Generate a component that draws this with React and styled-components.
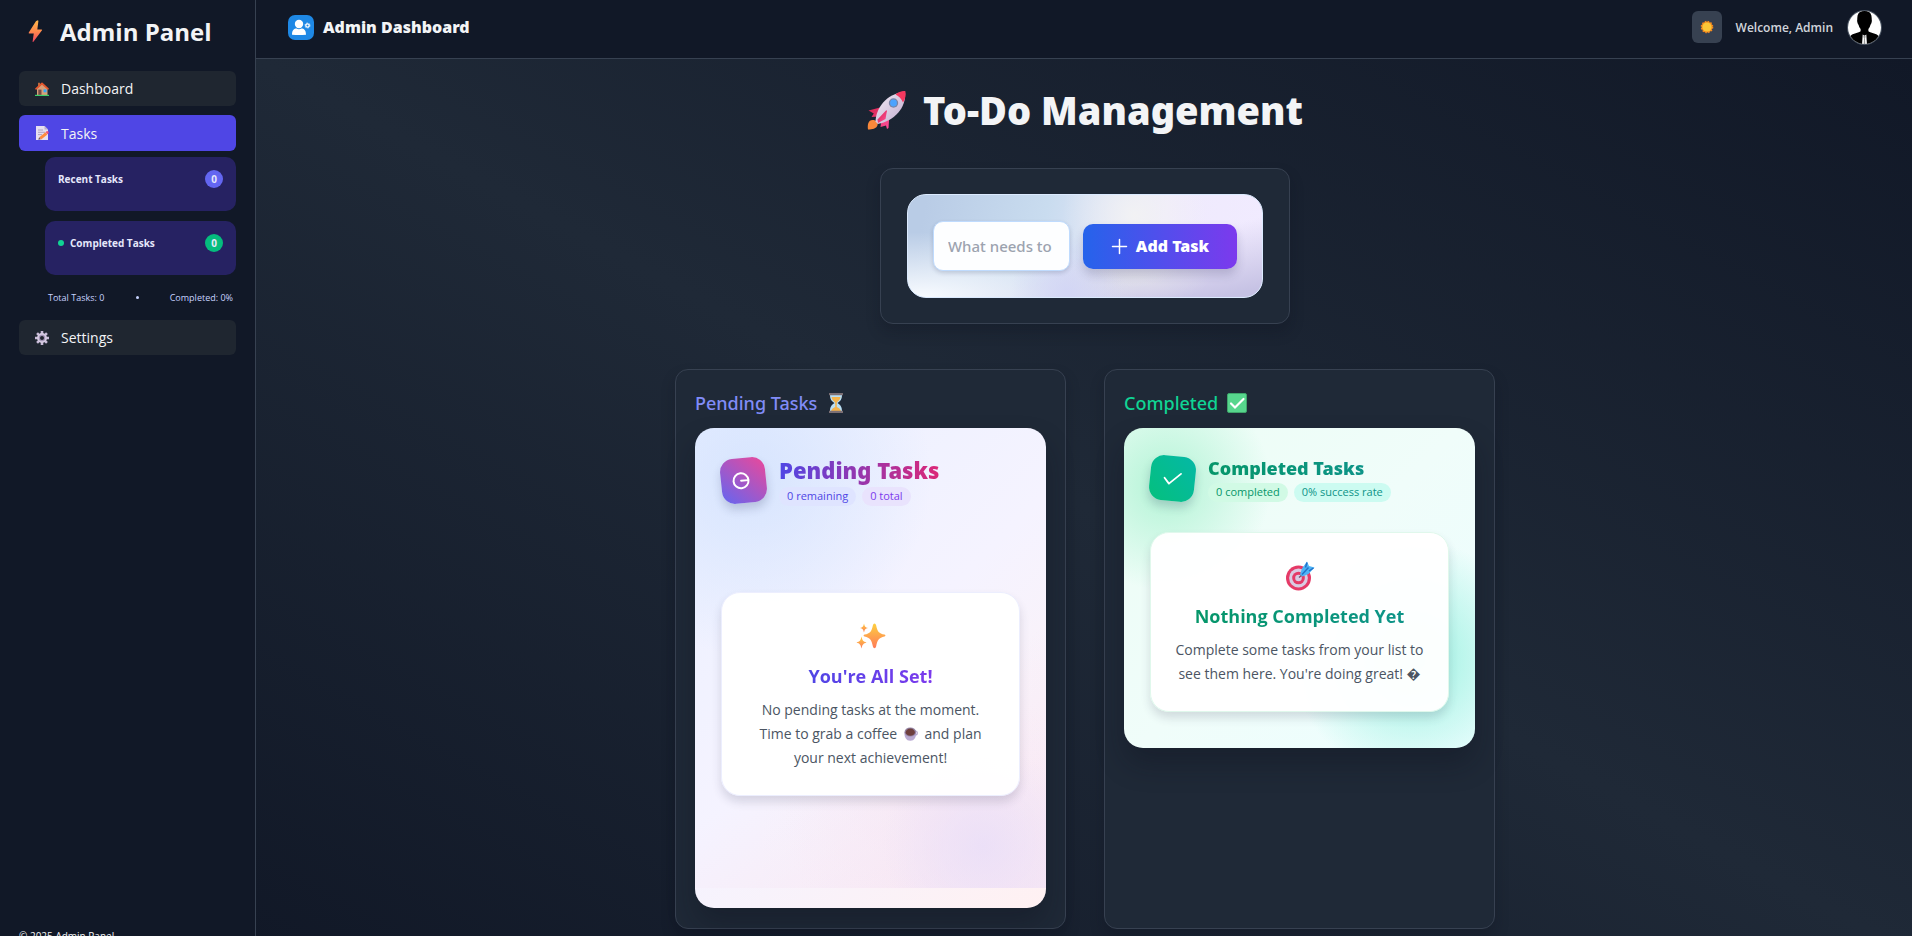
import React from "react";
import styled, { createGlobalStyle, css } from "styled-components";

const GlobalStyle = createGlobalStyle`
  *, *::before, *::after { box-sizing: border-box; }
  body {
    margin: 0;
    background: #111827;
    color: #f3f4f6;
    font-family: "Open Sans", "Noto Sans", "DejaVu Sans", sans-serif;
    font-size: 14px;
  }
  h1, h2, h3, p, ul { margin: 0; padding: 0; }
  ul { list-style: none; }
  a { color: inherit; text-decoration: none; }
  button, input { font: inherit; }
  svg { display: block; flex: none; }
`;

const heavy = css`
  font-family: "Noto Sans", "Open Sans", sans-serif;
  font-weight: 900;
`;

/* ---------- layout ---------- */

const Shell = styled.div`
  display: grid;
  grid-template-columns: 256px minmax(0, 1fr);
  min-height: 100vh;
`;

const Sidebar = styled.aside`
  display: flex;
  flex-direction: column;
  padding: 12px 19px 8px;
  background: #111827;
  border-right: 1px solid #374151;
`;

const Brand = styled.div`
  display: flex;
  align-items: center;
  gap: 13px;
  height: 39px;
  padding-left: 5px;
  margin-bottom: 20px;
  font-size: 24px;
  font-weight: 700;
  white-space: nowrap;
`;

const Nav = styled.nav`
  display: flex;
  flex-direction: column;
  gap: 9px;
  flex: 1;
`;

const NavItem = styled.a`
  display: flex;
  align-items: center;
  gap: 12px;
  height: ${(p) => (p.$active ? "36px" : "35px")};
  padding: 0 16px;
  border-radius: 6px;
  font-size: 14px;
  background: ${(p) => (p.$active ? "#4f46e5" : "#1f2630")};
`;

const SubList = styled.ul`
  display: flex;
  flex-direction: column;
  gap: 10px;
  padding: 0 0 0 26px;
  margin-top: -3px;
`;

const SubItem = styled.li`
  display: flex;
  align-items: flex-start;
  gap: 6px;
  height: 54px;
  padding: 13px;
  border-radius: 10px;
  background: #262262;
  color: #e5e7fb;
  font-size: 10px;
  line-height: 18px;
  font-weight: 700;
`;

const Dot = styled.span`
  width: 6px;
  height: 6px;
  margin-top: 6px;
  border-radius: 50%;
  background: #10d494;
`;

const Count = styled.span`
  width: 18px;
  height: 18px;
  margin-left: auto;
  border-radius: 50%;
  background: ${(p) => p.$color};
  font-size: 10px;
  text-align: center;
`;

const Totals = styled.div`
  display: flex;
  align-items: center;
  justify-content: space-between;
  height: 27px;
  padding: 0 3px 0 29px;
  color: #c7d2fe;
  font-size: 9px;
  font-weight: 500;
`;

const TinyDot = styled.span`
  width: 3px;
  height: 3px;
  border-radius: 50%;
  background: #c7d2fe;
`;

const Copyright = styled.footer`
  font-size: 10px;
  line-height: 18px;
`;

const Content = styled.div`
  display: flex;
  flex-direction: column;
  min-width: 0;
`;

const Header = styled.header`
  display: flex;
  align-items: center;
  gap: 14px;
  height: 59px;
  padding: 0 30px 4px 32px;
  background: #111827;
  border-bottom: 1px solid #374151;
`;

const HeaderTitle = styled.h2`
  ${heavy}
  display: flex;
  align-items: center;
  gap: 9px;
  margin-right: auto;
  font-size: 16px;
`;

const ThemeButton = styled.button`
  display: grid;
  place-items: center;
  width: 30px;
  height: 32px;
  padding: 0;
  border: 0;
  border-radius: 6px;
  background: #374151;
`;

const Welcome = styled.span`
  color: #d1d5db;
  font-size: 12px;
  font-weight: 600;
`;

const Main = styled.main`
  flex: 1;
  display: flex;
  flex-direction: column;
  align-items: center;
  padding: 24px 24px 24px 26px;
  background: linear-gradient(to top right, #111827, #1f2937 50%, #111827);
`;

const PageTitle = styled.h1`
  ${heavy}
  display: flex;
  align-items: center;
  gap: 16px;
  height: 54px;
  margin-bottom: 31px;
  font-size: 38px;
  white-space: nowrap;
`;

const panel = css`
  border: 1px solid #374151;
  border-radius: 13px;
  background: #1f2937;
  box-shadow: 0 8px 14px rgba(10, 15, 28, 0.25);
`;

const AddPanel = styled.section`
  ${panel}
  width: 100%;
  max-width: 410px;
  padding: 25px 26px;
  margin-bottom: 45px;
`;

const AddForm = styled.form`
  display: flex;
  align-items: center;
  gap: 13px;
  height: 104px;
  padding: 0 25px;
  border: 1px solid #dbeafe;
  border-radius: 19px;
  background:
    radial-gradient(circle at 64% 20%, rgba(243, 243, 243, 0.9), rgba(243, 243, 243, 0) 30%),
    radial-gradient(circle at 45% 95%, rgba(210, 213, 245, 0.9), rgba(210, 213, 245, 0) 26%),
    radial-gradient(ellipse at 64% 80%, rgba(222, 222, 232, 0.9), rgba(222, 222, 232, 0) 24%),
    radial-gradient(ellipse at 4% 100%, #f8fbff, rgba(228, 240, 251, 0) 45%),
    linear-gradient(168deg, rgba(240, 235, 255, 0) 55%, #c6c2e4 95%),
    linear-gradient(100deg, #b9cce6 5%, #c9dcef 38%, #efeafd 70%, #f1ebff);
`;

const TaskInput = styled.input`
  flex: 1;
  min-width: 0;
  height: 50px;
  padding: 0 15px 0 14px;
  border: 1px solid #bfdbfe;
  border-radius: 10px;
  outline: 0;
  background: #fdfeff;
  box-shadow: 0 2px 4px rgba(30, 41, 80, 0.18);
  color: #1f2937;
  font-family: "Noto Sans", "Open Sans", sans-serif;
  font-size: 15px;
  font-weight: 500;
  &::placeholder { color: #9ca3af; opacity: 1; }
`;

const AddButton = styled.button`
  ${heavy}
  display: flex;
  align-items: center;
  justify-content: center;
  gap: 8px;
  width: 154px;
  height: 45px;
  padding: 0;
  border: 0;
  border-radius: 10px;
  background: linear-gradient(90deg, #2563eb, #7c3aed);
  box-shadow: 0 6px 10px rgba(40, 40, 90, 0.2);
  color: #fff;
  font-size: 16px;
  white-space: nowrap;
`;

const Columns = styled.div`
  display: grid;
  grid-template-columns: repeat(2, minmax(0, 1fr));
  gap: 38px;
  width: 100%;
  max-width: 820px;
`;

const Column = styled.section`
  ${panel}
  padding: 20px 19px;
`;

const ColumnTitle = styled.h2`
  display: flex;
  align-items: center;
  gap: 9px;
  height: 26px;
  margin-bottom: 12px;
  color: ${(p) => p.$color};
  font-family: "Noto Sans", "Open Sans", sans-serif;
  font-size: 18px;
  font-weight: 500;
`;

const Board = styled.div`
  position: relative;
  display: flex;
  flex-direction: column;
  height: ${(p) => p.$height};
  padding: 26px;
  overflow: hidden;
  border-radius: 19px;
  box-shadow: 0 16px 28px rgba(12, 16, 28, 0.32);
  background: ${(p) => p.$background};
`;

const Glow = styled.div`
  position: absolute;
  inset: 0 0 20px;
  background:
    radial-gradient(circle 100px at 82% 91%, rgba(233, 222, 248, 0.8), rgba(236, 224, 248, 0)),
    radial-gradient(circle 150px at 68% 84%, rgba(246, 228, 243, 0.5), rgba(246, 228, 243, 0)),
    linear-gradient(150deg, rgba(247, 236, 248, 0) 60%, rgba(245, 228, 244, 0.8) 100%);
`;

const BoardHead = styled.div`
  position: relative;
  display: flex;
  align-items: flex-start;
  gap: 13px;
  height: 78px;
`;

const Tile = styled.div`
  display: grid;
  place-items: center;
  width: 45px;
  height: 45px;
  margin-top: ${(p) => p.$top};
  border-radius: 13px;
  background: ${(p) => p.$background};
  box-shadow: 0 6px 10px rgba(40, 50, 90, 0.2);
  transform: rotate(${(p) => p.$tilt});
`;

const gradientText = css`
  width: fit-content;
  background: ${(p) => p.$ink};
  background-clip: text;
  -webkit-background-clip: text;
  color: transparent;
`;

const BoardTitle = styled.h3`
  ${gradientText}
  ${heavy}
  font-size: ${(p) => p.$size};
  line-height: ${(p) => p.$line};
  white-space: nowrap;
`;

const Chips = styled.div`
  display: flex;
  gap: 6px;
`;

const Chip = styled.span`
  height: 19px;
  padding: 0 8px;
  border-radius: 10px;
  background: ${(p) => p.$background};
  color: ${(p) => p.$color};
  font-size: 11px;
  line-height: 18px;
  font-weight: 500;
  white-space: nowrap;
`;

const EmptyCard = styled.div`
  position: relative;
  display: flex;
  flex-direction: column;
  align-items: center;
  margin: ${(p) => p.$margin};
  padding: 27px 25px 25px;
  border: 1px solid ${(p) => p.$border};
  border-radius: 19px;
  background: rgba(255, 255, 255, 0.96);
  box-shadow: 0 6px 10px rgba(50, 50, 80, 0.16);
`;

const EmptyTitle = styled.h3`
  ${gradientText}
  margin: 11px 0 9px;
  font-size: 18px;
  line-height: 26px;
  font-weight: 700;
  white-space: nowrap;
`;

const EmptyText = styled.p`
  color: #4b5563;
  font-size: 14px;
  line-height: 24px;
  text-align: center;
  white-space: nowrap;
  svg { display: inline-block; margin: 0 3px; vertical-align: -2px; }
`;

/* ---------- drawings ---------- */

const Bolt = () => (
  <svg width="23" height="23" viewBox="0 0 24 24" aria-hidden="true">
    <defs>
      <linearGradient id="bolt" x1="0" y1="0" x2="0" y2="1">
        <stop offset="0" stopColor="#ffb84a" />
        <stop offset="0.5" stopColor="#ff8a4c" />
        <stop offset="1" stopColor="#f0425f" />
      </linearGradient>
    </defs>
    <path fill="url(#bolt)" d="M12.600 1 5 13q-.5 1 .6 1h4.600L9 22.500q0 1 .8.200L18.800 10.800q.5-.9-.6-.9h-4.300L15 1.400q0-1.400-1-1z" />
  </svg>
);

const House = () => (
  <svg width="14" height="14" viewBox="0 0 14 14" aria-hidden="true">
    <path fill="#bb6a3c" d="M3 .8h2v4H3z" />
    <path fill="#d8a078" d="M2 6.500 7.200 2 12.500 6.500V13H2z" />
    <path fill="#7a4a45" d="M3.300 7.600h3.200V13H3.300z" />
    <path fill="#35a8f5" d="M8.500 7.300h3v3h-3z" />
    <path fill="none" stroke="#e4572e" strokeWidth="1.700" strokeLinecap="round" strokeLinejoin="round" d="M1 6.800 7 1.500l6 5.300" />
    <path fill="#3ecf6a" d="M0 12.800h14V14H0z" />
  </svg>
);

const Memo = () => (
  <svg width="14" height="14" viewBox="0 0 14 14" aria-hidden="true">
    <path fill="#e6dff0" d="M1 0h8.500L13 3.500V14H1z" />
    <path fill="#b9aecb" d="M9.500 0 13 3.500H9.500z" />
    <path stroke="#a99bbd" strokeWidth=".9" d="M3 4h5M3 6.300h7M3 8.600h4" />
    <path stroke="#ff8a3c" strokeWidth="3" d="m5.200 12.300 6.200-5" />
    <path fill="#f0506e" d="m10.600 5.900 1.400-.9q1.500 0 1.900 1.700l-1.600 1.500z" />
    <path fill="#6b5560" d="m3.300 13.700.8-2.500 1.700 2z" />
  </svg>
);

const Gear = () => (
  <svg width="14" height="14" viewBox="0 0 14 14" aria-hidden="true">
    <g stroke="#c9bcd8" strokeWidth="2.600">
      <path d="M7 0v14M0 7h14M2.050 2.050l9.900 9.900M11.950 2.050l-9.900 9.900" />
    </g>
    <circle cx="7" cy="7" r="4.900" fill="#d6cbe2" />
    <circle cx="7" cy="7" r="3.200" fill="#a394b5" />
    <circle cx="7" cy="7" r="2" fill="#20242f" />
  </svg>
);

const AdminBadge = () => (
  <svg width="26" height="25" viewBox="0 0 26 25" aria-hidden="true">
    <rect width="26" height="25" rx="7" fill="#1e88e5" />
    <circle cx="11" cy="9" r="4.200" fill="#fff" />
    <path fill="#fff" d="M4 19.700c0-4.400 2-6.200 4.600-6.200q2.400 1.500 4.800 0c2.600 0 4.600 1.800 4.600 6.200q-7 .8-14 0z" />
    <circle cx="19.500" cy="10.500" r="1.700" fill="none" stroke="#fff" strokeWidth="1.300" />
    <circle cx="19.500" cy="10.500" r="2.500" fill="none" stroke="#fff" strokeWidth="1" strokeDasharray="1.100 1.518" />
  </svg>
);

const Sun = () => (
  <svg width="14" height="14" viewBox="0 0 14 14" aria-hidden="true">
    <circle cx="7" cy="7" r="5.500" fill="#f58a1f" />
    <circle cx="7" cy="7" r="5.500" fill="none" stroke="#f58a1f" strokeWidth="1.600" strokeDasharray="1.500 1.380" />
    <circle cx="7" cy="7" r="4.600" fill="#fcc637" />
  </svg>
);

const Avatar = () => (
  <svg width="35" height="35" viewBox="0 0 35 35" role="img" aria-label="Admin">
    <defs><clipPath id="face"><circle cx="17.500" cy="17.500" r="16.500" /></clipPath></defs>
    <circle cx="17.500" cy="17.500" r="17.500" fill="#4b5563" />
    <g clipPath="url(#face)">
      <path fill="#fff" d="M0 0h35v35H0z" />
      <path d="M17.500.8c5 0 7.500 3 7.200 8.200 0 1 .4 1.300 0 3-.4 2-1 2-1.300 3-.6 2.200-1.300 3-2 4v2.200c3 2.300 8.500 1.800 10.600 5.300L33 35H2l1-8.500c2.100-3.500 7.600-3 10.600-5.300V19c-.7-1-1.400-1.800-2-4-.3-1-.9-1-1.300-3-.4-1.700 0-2 0-3C10 3.800 12.500.8 17.500.8z" />
      <path fill="#fff" d="m15.700 24.500 1.800 1.200 1.800-1.200.7 10.500h-5z" />
      <path d="m16.700 25.500.8.600.8-.6.300 1.500-.7 1.200.4 5.800h-1.600l.4-5.800-.7-1.200z" fill="#999" />
    </g>
  </svg>
);

const Rocket = () => (
  <svg width="40" height="40" viewBox="0 0 40 40" aria-hidden="true">
    <defs>
      <linearGradient id="hull" x1="0" y1="0" x2="1" y2="1">
        <stop offset="0" stopColor="#f3edf7" />
        <stop offset="1" stopColor="#bfa9cc" />
      </linearGradient>
      <linearGradient id="fin" x1="0" y1="0" x2="1" y2="1">
        <stop offset="0" stopColor="#d8254e" />
        <stop offset="1" stopColor="#ff4f9b" />
      </linearGradient>
    </defs>
    <path fill="#f9883a" d="M1 39.500c-.6-5 .2-9.500 4.600-9.500 3.800 0 6 2.500 4.800 5.500-1 3-5 4-9.400 4z" />
    <path fill="url(#fin)" d="M1.500 20.500 15 17l-3 9.500-7.500.5 2.300-3.500zM20 39l-1-3.500-5.500 1.500 1-8 8-5-1 14z" />
    <path fill="url(#hull)" d="M8.500 31.500C9 19 18 4 38 1.500 39.800 18 27 31 10.800 34z" />
    <path fill="#f5385f" d="M28.500 4.500C31 2 35 .7 38.300 1c.9 3.500.2 8-2.300 11.500-1.500-3.500-4-6.500-7.500-8z" />
    <circle cx="26.500" cy="13" r="4.700" fill="#7a84a6" />
    <circle cx="26.500" cy="13" r="3.400" fill="#4da3ff" />
    <path fill="url(#fin)" d="m10.500 29.500 8.500-9q1-.5.900.8L18.500 29l-7.500 4z" />
  </svg>
);

const Plus = () => (
  <svg width="17" height="17" viewBox="0 0 17 17" fill="none" stroke="#fff" strokeWidth="1.500" strokeLinecap="round" aria-hidden="true">
    <path d="M8.500 1.500v14M1.500 8.500h14" />
  </svg>
);

const Hourglass = () => (
  <svg width="20" height="20" viewBox="0 0 20 20" aria-hidden="true">
    <path fill="#b9dff5" d="M4 1.500h12c0 5-1.500 6.500-4.500 8.500 3 2 4.500 3.500 4.500 8.500H4C4 13.500 5.500 12 8.500 10 5.500 8 4 6.500 4 1.500z" />
    <path fill="#f6b44c" d="M5.500 4h9c-.3 2.500-2 4-3.700 5.500V14c2 .7 3.500 2 4.200 4H5c.7-2 2.200-3.300 4.200-4V9.500C7.500 8 5.800 6.500 5.500 4z" />
    <path fill="#7b6f74" d="M3 0h14v2.200H3zM3 17.800h14V20H3z" />
  </svg>
);

const CheckBadge = () => (
  <svg width="20" height="20" viewBox="0 0 20 20" aria-hidden="true">
    <rect x=".5" y=".5" width="19" height="19" rx="1.500" fill="#57d68d" stroke="#3fa56b" />
    <path d="m4 10.500 4 4 8.500-8.500" fill="none" stroke="#fff" strokeWidth="2.200" strokeLinecap="round" />
  </svg>
);

const Clock = () => (
  <svg width="23" height="19" viewBox="0 0 23 19" fill="none" stroke="#fff" strokeWidth="2" strokeLinecap="round" aria-hidden="true">
    <circle cx="9" cy="9.500" r="7.500" />
    <path d="M9 9.500H16" strokeWidth="1.800" />
  </svg>
);

const Tick = () => (
  <svg width="21" height="21" viewBox="0 0 21 21" fill="none" stroke="#fff" strokeWidth="1.800" strokeLinecap="round" strokeLinejoin="round" aria-hidden="true">
    <path d="m2.500 10.500 5 5.500L18.500 5" />
  </svg>
);

const Sparkles = () => (
  <svg width="30" height="32" viewBox="0 0 30 32" aria-hidden="true">
    <defs>
      <linearGradient id="spark" x1="0" y1="0" x2="0" y2="1">
        <stop offset="0" stopColor="#fdd03f" />
        <stop offset="1" stopColor="#ff7a59" />
      </linearGradient>
    </defs>
    <g fill="url(#spark)">
      <path d="M18.500 3.500q1.200 0 1.600 1.700c1.400 6.500 2.700 8.100 8.400 9.400q1.900.9 0 1.800c-5.700 1.500-7 3.200-8.400 10.200q-.4 1.700-1.600 1.700t-1.600-1.700c-1.400-7-2.700-8.700-8.400-10.200q-1.900-.9 0-1.800c5.700-1.300 7-2.900 8.400-9.400q.4-1.700 1.600-1.700z" />
      <path d="M8 3.500C8.700 6.600 9.300 7.300 12 8c-2.700.7-3.300 1.400-4 4.500C7.300 9.400 6.700 8.700 4 8c2.700-.7 3.300-1.400 4-4.500z" />
      <path d="M5.500 16.500c.9 4 1.700 5 5 6-3.300 1-4.100 2-5 6-.9-4-1.700-5-5-6 3.300-1 4.100-2 5-6z" />
    </g>
  </svg>
);

const Target = () => (
  <svg width="30" height="32" viewBox="0 0 30 32" aria-hidden="true">
    <circle cx="13.500" cy="18" r="12.500" fill="#e53a67" />
    <circle cx="13.500" cy="18" r="9.400" fill="#d9cbe2" />
    <circle cx="13.500" cy="18" r="6.300" fill="#e53a67" />
    <circle cx="13.500" cy="18" r="3.300" fill="#d9cbe2" />
    <path stroke="#6d5470" strokeWidth="1.400" d="m14 17.500 3-2.500" />
    <path fill="#4db3f6" d="m15 14.500 2-6 5-7 2 4.500 5.500 1.500-6 6.500-6 2.500z" />
    <path stroke="#2472c8" strokeWidth="1.500" fill="none" d="m17 14.500 6.500-7M20.500 7.500 22 2.500M24 11l4.500-3" />
  </svg>
);

const Coffee = () => (
  <svg width="14" height="14" viewBox="0 0 14 14" aria-hidden="true">
    <circle cx="11.300" cy="6" r="2" fill="none" stroke="#b6a6cc" strokeWidth="1.200" />
    <path fill="#baaad2" d="M.5 5h11.600c.4 5-1.700 8.800-5.800 8.800S0 10 .5 5z" />
    <ellipse cx="6.300" cy="5" rx="5.800" ry="4.600" fill="#9483a3" />
    <ellipse cx="6.300" cy="5.200" rx="4.600" ry="3.600" fill="#6e3f3e" />
  </svg>
);

/* ---------- page ---------- */

const indigoInk = "linear-gradient(90deg, #4f46e5, #db2777)";
const greenInk = "linear-gradient(90deg, #059669, #0d9488)";

export default function App() {
  return (
    <>
      <GlobalStyle />
      <Shell>
        <Sidebar>
          <Brand><Bolt /><span>Admin Panel</span></Brand>
          <Nav aria-label="Admin">
            <NavItem href="#dashboard"><House />Dashboard</NavItem>
            <NavItem href="#tasks" $active aria-current="page"><Memo />Tasks</NavItem>
            <SubList>
              <SubItem>Recent Tasks<Count $color="#6366f1">0</Count></SubItem>
              <SubItem><Dot />Completed Tasks<Count $color="#05bd7e">0</Count></SubItem>
            </SubList>
            <Totals><span>Total Tasks: 0</span><TinyDot /><span>Completed: 0%</span></Totals>
            <NavItem href="#settings"><Gear />Settings</NavItem>
          </Nav>
          <Copyright>© 2025 Admin Panel</Copyright>
        </Sidebar>

        <Content>
          <Header>
            <HeaderTitle><AdminBadge />Admin Dashboard</HeaderTitle>
            <ThemeButton type="button" aria-label="Toggle theme"><Sun /></ThemeButton>
            <Welcome>Welcome, Admin</Welcome>
            <Avatar />
          </Header>

          <Main>
            <PageTitle><Rocket />To-Do Management</PageTitle>

            <AddPanel>
              <AddForm onSubmit={(e) => e.preventDefault()}>
                <TaskInput aria-label="New task" placeholder="What needs to be done?" />
                <AddButton type="submit"><Plus />Add Task</AddButton>
              </AddForm>
            </AddPanel>

            <Columns>
              <Column>
                <ColumnTitle $color="#818cf8">Pending Tasks<Hourglass /></ColumnTitle>
                <Board
                  $height="480px"
                  $background="radial-gradient(circle 180px at 16% 10%, rgba(214, 228, 254, 0.95), rgba(224, 233, 255, 0)), linear-gradient(135deg, #eaf0ff, #f5f3ff 50%, #fff1f2)"
                >
                  <Glow />
                  <BoardHead>
                    <Tile $top="4px" $tilt="-6deg" $background="linear-gradient(45deg, #6366f1, #ec4899)"><Clock /></Tile>
                    <div>
                      <BoardTitle $size="22px" $line="33px" $ink={indigoInk}>Pending Tasks</BoardTitle>
                      <Chips>
                        <Chip $background="#dfe4ff" $color="#4f46e5">0 remaining</Chip>
                        <Chip $background="#e9e3fd" $color="#7c3aed">0 total</Chip>
                      </Chips>
                    </div>
                  </BoardHead>
                  <EmptyCard $margin="60px 0 0" $border="#eceefe">
                    <Sparkles />
                    <EmptyTitle $ink="linear-gradient(90deg, #4f46e5, #7c3aed)">You're All Set!</EmptyTitle>
                    <EmptyText>
                      No pending tasks at the moment.<br />
                      Time to grab a coffee <Coffee /> and plan<br />
                      your next achievement!
                    </EmptyText>
                  </EmptyCard>
                </Board>
              </Column>

              <Column>
                <ColumnTitle $color="#10d494">Completed<CheckBadge /></ColumnTitle>
                <Board
                  $height="320px"
                  $background="radial-gradient(circle 105px at 12% 18%, rgba(176, 243, 212, 0.95), rgba(190, 246, 220, 0)), radial-gradient(circle 120px at 82% 72%, rgba(148, 240, 222, 0.95), rgba(180, 245, 235, 0)), linear-gradient(135deg, #ecfdf5, #f0fdfa 50%, #ecfeff)"
                >
                  <BoardHead>
                    <Tile $top="2px" $tilt="6deg" $background="linear-gradient(45deg, #05c07d, #05b8a6)"><Tick /></Tile>
                    <div>
                      <BoardTitle $size="18px" $line="29px" $ink={greenInk}>Completed Tasks</BoardTitle>
                      <Chips>
                        <Chip $background="#d1fae5" $color="#059669">0 completed</Chip>
                        <Chip $background="#ccfbf1" $color="#0d9488">0% success rate</Chip>
                      </Chips>
                    </div>
                  </BoardHead>
                  <EmptyCard $margin="0" $border="#e0f8ec">
                    <Target />
                    <EmptyTitle $ink={greenInk}>Nothing Completed Yet</EmptyTitle>
                    <EmptyText>
                      Complete some tasks from your list to<br />
                      see them here. You're doing great! �
                    </EmptyText>
                  </EmptyCard>
                </Board>
              </Column>
            </Columns>
          </Main>
        </Content>
      </Shell>
    </>
  );
}
